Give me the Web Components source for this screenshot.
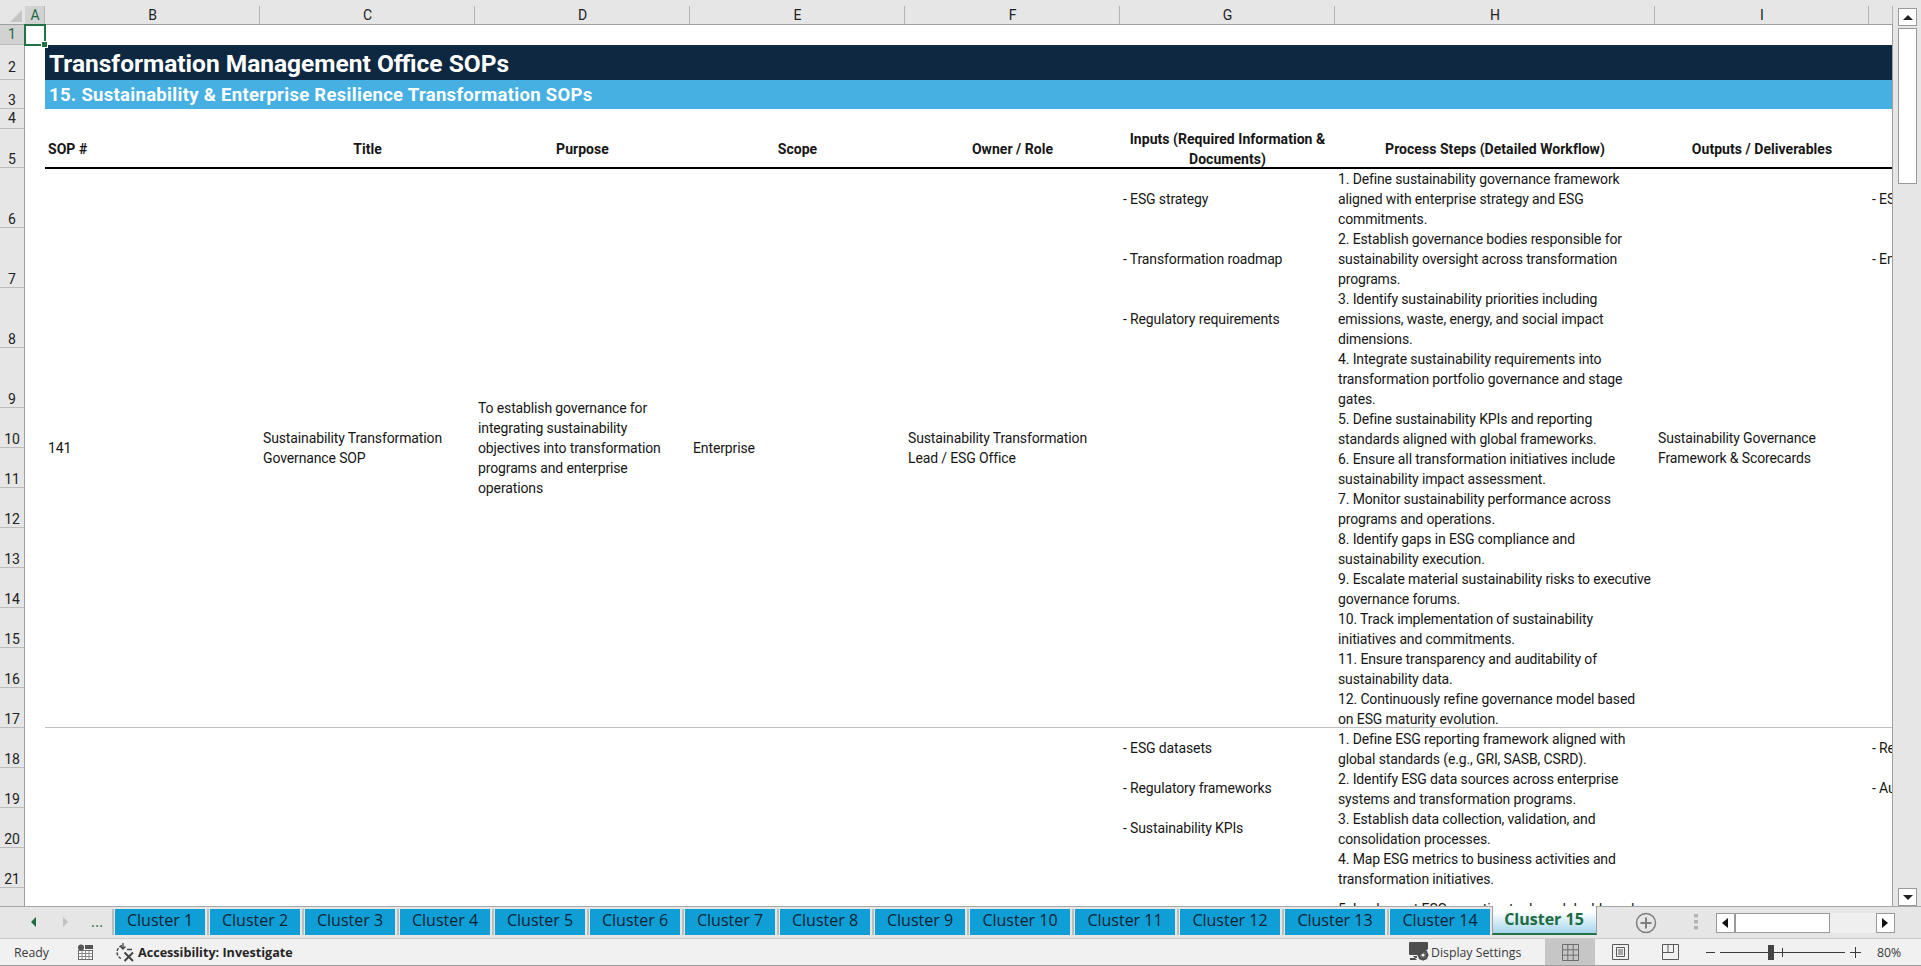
<!DOCTYPE html>
<html>
<head>
<meta charset="utf-8">
<title>Cluster 15</title>
<style>
  html, body { margin: 0; height: 966px; overflow: hidden; background: #e6e6e6; }
  body { font-family: Roboto, "Liberation Sans", sans-serif; }
</style>
</head>
<body>
<xl-app></xl-app>
<script>
const COLS = [25, 20, 215, 215, 215, 215, 215, 215, 320, 214, 24];
const ROWS = [25, 20, 35, 29, 20, 39, 60, 60, 60, 60, 40, 40, 40, 40, 40, 40, 40, 40, 40, 40, 40, 40, 60];

const STEPS = [
    ['1. Define sustainability governance framework', 'aligned with enterprise strategy and ESG', 'commitments.'],
    ['2. Establish governance bodies responsible for', 'sustainability oversight across transformation', 'programs.'],
    ['3. Identify sustainability priorities including', 'emissions, waste, energy, and social impact', 'dimensions.'],
    ['4. Integrate sustainability requirements into', 'transformation portfolio governance and stage', 'gates.'],
    ['5. Define sustainability KPIs and reporting', 'standards aligned with global frameworks.'],
    ['6. Ensure all transformation initiatives include', 'sustainability impact assessment.'],
    ['7. Monitor sustainability performance across', 'programs and operations.'],
    ['8. Identify gaps in ESG compliance and', 'sustainability execution.'],
    ['9. Escalate material sustainability risks to executive', 'governance forums.'],
    ['10. Track implementation of sustainability', 'initiatives and commitments.'],
    ['11. Ensure transparency and auditability of', 'sustainability data.'],
    ['12. Continuously refine governance model based', 'on ESG maturity evolution.'],
    ['1. Define ESG reporting framework aligned with', 'global standards (e.g., GRI, SASB, CSRD).'],
    ['2. Identify ESG data sources across enterprise', 'systems and transformation programs.'],
    ['3. Establish data collection, validation, and', 'consolidation processes.'],
    ['4. Map ESG metrics to business activities and', 'transformation initiatives.']
];

class XlCell extends HTMLElement {
    constructor() {
        super();
        this.attachShadow({ mode: 'open' });
        this.shadowRoot.innerHTML = `
            <style>
                :host {
                    display: flex;
                    align-items: center;
                    box-sizing: border-box;
                    min-width: 0;
                    overflow: hidden;
                    padding-left: 3px;
                    font-size: 14px;
                    line-height: 20px;
                    letter-spacing: -0.13px;
                    color: #161616;
                    white-space: nowrap;
                }
                :host([top]) { align-items: flex-start; padding-top: 1px; }
                :host([shift]) { padding-top: 2px; }
                :host([head]) {
                    font-weight: 700;
                    border-bottom: 2px solid #000;
                    margin-bottom: -1px;
                    padding-top: 1px;
                    letter-spacing: 0.04px;
                }
                :host([mid]) { justify-content: center; text-align: center; padding-left: 0; }
                :host([line]) { border-bottom: 1px solid #bfbfbf; }
            </style>
            <div><slot></slot></div>
        `;
    }
}

class XlSheet extends HTMLElement {
    constructor() {
        super();
        this.attachShadow({ mode: 'open' });
        const letters = 'ABCDEFGHI ';
        let cells = '';
        const at = (row, col, rowSpan = 1, colSpan = 1) =>
            `grid-row:${row + 1} / span ${rowSpan};grid-column:${col + 1} / span ${colSpan}`;

        // column and row headings
        cells += `<div class="corner" style="${at(0, 0)}"><i></i></div>`;
        letters.split('').forEach((l, i) => {
            cells += `<div class="col ${i === 0 ? 'on' : ''}" style="${at(0, i + 1)}">${l}</div>`;
        });
        for (let r = 1; r < ROWS.length; r++) {
            const cls = r === 1 ? 'on' : (r === 2 ? 'two' : (r === 4 ? 'low' : ''));
            cells += `<div class="row ${cls}" style="${at(r, 0)}"><span>${r}</span></div>`;
        }

        // banners
        cells += `<div class="band title" style="${at(2, 2, 1, 9)}"><span>Transformation Management Office SOPs</span></div>`;
        cells += `<div class="band sub" style="${at(3, 2, 1, 9)}"><span>15. Sustainability &amp; Enterprise Resilience Transformation SOPs</span></div>`;

        // table heading
        const heads = ['Title', 'Purpose', 'Scope', 'Owner / Role', 'Inputs (Required Information &amp;<br>Documents)', 'Process Steps (Detailed Workflow)', 'Outputs / Deliverables'];
        cells += `<xl-cell head style="${at(5, 2)}">SOP #</xl-cell>`;
        heads.forEach((h, i) => { cells += `<xl-cell head mid style="${at(5, 3 + i)}">${h}</xl-cell>`; });
        cells += `<xl-cell head style="${at(5, 10)}"></xl-cell>`;

        // SOP 141
        cells += `<xl-cell line style="${at(6, 2, 12)}">141</xl-cell>`;
        cells += `<xl-cell line style="${at(6, 3, 12)}">Sustainability Transformation<br>Governance SOP</xl-cell>`;
        cells += `<xl-cell line style="${at(6, 4, 12)}">To establish governance for<br>integrating sustainability<br>objectives into transformation<br>programs and enterprise<br>operations</xl-cell>`;
        cells += `<xl-cell line style="${at(6, 5, 12)}">Enterprise</xl-cell>`;
        cells += `<xl-cell line style="${at(6, 6, 12)}">Sustainability Transformation<br>Lead / ESG Office</xl-cell>`;
        cells += `<xl-cell line style="${at(6, 9, 12)}">Sustainability Governance<br>Framework &amp; Scorecards</xl-cell>`;
        ['- ESG strategy', '- Transformation roadmap', '- Regulatory requirements'].forEach((t, i) => {
            cells += `<xl-cell shift style="${at(6 + i, 7)}">${t}</xl-cell>`;
        });
        cells += `<xl-cell line style="${at(17, 7)}"></xl-cell><xl-cell line style="${at(17, 10)}"></xl-cell>`;
        cells += `<xl-cell shift style="${at(6, 10)}">- ES</xl-cell><xl-cell shift style="${at(7, 10)}">- En</xl-cell>`;

        // SOP 142, only its first rows are in view
        ['- ESG datasets', '- Regulatory frameworks', '- Sustainability KPIs'].forEach((t, i) => {
            cells += `<xl-cell style="${at(18 + i, 7)}">${t}</xl-cell>`;
        });
        cells += `<xl-cell style="${at(18, 10)}">- Re</xl-cell><xl-cell style="${at(19, 10)}">- Au</xl-cell>`;

        STEPS.forEach((lines, i) => {
            const last = i === 11 ? 'line' : '';
            cells += `<xl-cell top ${last} style="${at(6 + i, 8)}">${lines.join('<br>')}</xl-cell>`;
        });
        cells += `<xl-cell class="next" style="${at(22, 8)}">5. Implement ESG reporting tools and dashboards</xl-cell>`;

        this.shadowRoot.innerHTML = `
            <style>
                :host {
                    display: block;
                    flex: none;
                    position: relative;
                    width: 1893px;
                    height: 906px;
                    box-sizing: border-box;
                    overflow: hidden;
                    background: #fff;
                    font-family: Roboto, "Liberation Sans", sans-serif;
                }
                .grid {
                    display: grid;
                    grid-template-columns: ${COLS.map(c => c + 'px').join(' ')};
                    grid-template-rows: ${ROWS.map(r => r + 'px').join(' ')};
                }
                .corner, .col { background: #e6e6e6; border-bottom: 1px solid #9f9f9f; box-sizing: border-box; }
                .corner { position: relative; }
                .corner i {
                    position: absolute; left: 10px; top: 10px; width: 0; height: 0;
                    border-left: 12px solid transparent;
                    border-bottom: 12px solid #c4c4c4;
                }
                .col {
                    display: flex; align-items: flex-end; justify-content: center;
                    font-size: 14px; line-height: 17px; color: #222;
                    position: relative;
                }
                .col::after {
                    content: ''; position: absolute; right: 0; top: 6px; bottom: 0;
                    width: 1px; background: #b4b4b4;
                }
                .col.on { background: linear-gradient(#e6e6e6 6px, #d2d2d2 6px); color: #1d6b41; }
                .row {
                    display: flex; align-items: flex-end; justify-content: center;
                    background: #e6e6e6;
                    border-right: 1px solid #9f9f9f;
                    border-bottom: 1px solid #bdbdbd;
                    box-sizing: border-box;
                    font-size: 14px; color: #222;
                }
                .row span { line-height: 18px; margin-bottom: -1px; }
                .row.on span, .row.low span { margin-bottom: 1px; }
                .row.two span { margin-bottom: 3px; }
                .row.on { background: #d2d2d2; color: #1d6b41; }
                .band { display: flex; align-items: center; padding: 1px 0 0 4px; box-sizing: border-box; overflow: hidden; color: #fff; font-weight: 700; white-space: nowrap; }
                .title { background: #0e2841; font-size: 24.5px; }
                .sub { background: #45b0e1; font-size: 18.5px; letter-spacing: 0.3px; }
                .sel {
                    position: absolute; left: 24px; top: 24px; width: 22px; height: 22px;
                    box-sizing: border-box;
                    border: 2px solid #217346;
                }
                .sel::after {
                    content: ''; position: absolute; right: -4px; bottom: -4px;
                    width: 5px; height: 5px; background: #217346; border: 1px solid #fff;
                }
                .edge { position: absolute; right: 0; top: 25px; bottom: 0; width: 1px; background: #9f9f9f; }
                xl-cell.next { padding-top: 11px; align-items: flex-start; }
            </style>
            <div class="grid">${cells}</div>
            <div class="sel"></div>
            <div class="edge"></div>
        `;
    }
}

class XlVscroll extends HTMLElement {
    constructor() {
        super();
        this.attachShadow({ mode: 'open' });
        this.shadowRoot.innerHTML = `
            <style>
                :host {
                    display: flex;
                    flex: 1;
                    flex-direction: column;
                    align-items: center;
                    box-sizing: border-box;
                    height: 906px;
                    padding: 8px 0 0 1px;
                    background: #e6e6e6;
                }
                .btn {
                    width: 19px; height: 18px; box-sizing: border-box;
                    background: #fff; border: 1px solid #9a9a9a;
                    display: flex; align-items: center; justify-content: center;
                }
                .thumb {
                    width: 19px; height: 156px; box-sizing: border-box; margin-top: 2px;
                    background: #fff; border: 1px solid #9a9a9a;
                }
                .gap { flex: 1; }
                i { width: 0; height: 0; border: 5px solid transparent; }
                .up { border-bottom: 5px solid #222; border-top: 0; }
                .down { border-top: 5px solid #222; border-bottom: 0; }
            </style>
            <div class="btn"><i class="up"></i></div>
            <div class="thumb"></div>
            <div class="gap"></div>
            <div class="btn"><i class="down"></i></div>
        `;
    }
}

class XlTab extends HTMLElement {
    constructor() {
        super();
        this.attachShadow({ mode: 'open' });
        this.shadowRoot.innerHTML = `
            <style>
                :host {
                    display: flex;
                    flex: none;
                    align-items: center;
                    justify-content: center;
                    box-sizing: border-box;
                    width: 90px;
                    height: 26px;
                    padding-bottom: 4px;
                    background: #0f9ed5;
                    color: #0a2433;
                    font-size: 16px;
                    white-space: nowrap;
                }
                :host([wide]) { width: 100px; }
                :host([active]) {
                    width: 105px;
                    height: 29px;
                    margin: -3px 0 0 -3.5px;
                    padding: 0 0 1px;
                    background: linear-gradient(#fff 20%, #a5d6ee);
                    border-left: 1px solid #9f9f9f;
                    border-right: 1px solid #9f9f9f;
                    border-bottom: 2px solid #217346;
                    color: #1d6b41;
                    font-weight: 700;
                }
            </style>
            <slot></slot>
        `;
    }
}

class XlTabBar extends HTMLElement {
    constructor() {
        super();
        this.attachShadow({ mode: 'open' });
        let tabs = '';
        for (let n = 1; n <= 15; n++) {
            const attr = n === 15 ? 'active' : (n >= 10 ? 'wide' : '');
            tabs += `<i class="sep"></i><xl-tab ${attr}>Cluster ${n}</xl-tab>`;
        }
        this.shadowRoot.innerHTML = `
            <style>
                :host {
                    display: flex;
                    flex: none;
                    align-items: flex-start;
                    box-sizing: border-box;
                    height: 32px;
                    padding-top: 2px;
                    background: #e6e6e6;
                    border-top: 1px solid #a6a6a6;
                    font-family: "Open Sans", Roboto, sans-serif;
                }
                .nav { display: flex; align-items: center; width: 111.5px; height: 26px; flex: none; }
                .nav svg { flex: none; }
                .dots { margin-left: 22px; color: #1d6b41; font-size: 14px; line-height: 18px; letter-spacing: 0.5px; }
                .sep { width: 2px; height: 26px; margin: 0 1.5px; background: #bdbdbd; flex: none; }
                .sep:first-of-type { margin: 0 1.5px 0 0; }
                .plus { margin: 3px 0 0 38px; flex: none; }
                .grip { margin: 5px 0 0 37px; flex: none; }
                .hs {
                    display: flex; flex: none; box-sizing: border-box;
                    width: 179px; height: 20px; margin: 4px 0 0 18px;
                    background: #efefef;
                }
                .hs b { display: flex; align-items: center; justify-content: center; box-sizing: border-box; background: #fff; border: 1px solid #9a9a9a; }
                .hs .arr { width: 19px; }
                .hs .thumb { width: 95px; }
                .hs .track { flex: 1; }
                .hs i { width: 0; height: 0; border: 5px solid transparent; }
                .hs .l { border-right: 6px solid #111; border-left: 0; }
                .hs .r { border-left: 6px solid #111; border-right: 0; }
            </style>
            <div class="nav">
                <svg width="7" height="12" viewBox="0 0 7 12" style="margin-left:30px"><path d="M6 1 L1 6 L6 11 Z" fill="#1d6b41"/></svg>
                <svg width="7" height="12" viewBox="0 0 7 12" style="margin-left:25px"><path d="M1 1 L6 6 L1 11 Z" fill="#c2c2c2"/></svg>
                <span class="dots">...</span>
            </div>
            ${tabs}
            <svg class="plus" width="22" height="22" viewBox="0 0 22 22" fill="none" stroke="#7f7f7f">
                <circle cx="11" cy="11" r="9.5" stroke-width="1.5"/>
                <path d="M11 5.5 V16.5 M5.5 11 H16.5" stroke-width="2"/>
            </svg>
            <svg class="grip" width="4" height="16" viewBox="0 0 4 16" fill="#b3b3b3">
                <rect width="4" height="3.4"/><rect y="6" width="4" height="3.4"/><rect y="12" width="4" height="3.4"/>
            </svg>
            <div class="hs">
                <b class="arr"><i class="l"></i></b>
                <b class="thumb"></b>
                <span class="track"></span>
                <b class="arr"><i class="r"></i></b>
            </div>
        `;
    }
}

class XlStatus extends HTMLElement {
    constructor() {
        super();
        this.attachShadow({ mode: 'open' });
        this.shadowRoot.innerHTML = `
            <style>
                :host {
                    display: flex;
                    flex: 1;
                    align-items: center;
                    box-sizing: border-box;
                    background: #f1f1f1;
                    border-top: 1px solid #c9c9c9;
                    border-bottom: 1px solid #9c9c9c;
                    font-family: "Open Sans", Roboto, sans-serif;
                    font-size: 12.3px;
                    color: #3a3a3a;
                    white-space: nowrap;
                }
                svg { flex: none; }
                .ready { margin-left: 14px; width: 63px; }
                .acc { margin-left: 3px; font-size: 12.6px; font-weight: 700; color: #262626; }
                .disp { margin-left: auto; }
                .view { display: flex; align-items: center; justify-content: center; width: 50px; align-self: stretch; flex: none; }
                .view.on { background: #c6c6c6; }
                .zoom { display: flex; align-items: center; flex: none; }
                .track { position: relative; width: 125px; height: 1px; background: #3a3a3a; margin: 0 5px; }
                .track b { position: absolute; left: 48px; top: -7px; width: 6px; height: 15px; background: #444; }
                .track u { position: absolute; left: 62px; top: -4px; width: 1px; height: 9px; background: #3a3a3a; }
                .pct { width: 60px; padding-left: 16px; box-sizing: border-box; }
            </style>
            <span class="ready">Ready</span>
            <svg width="17" height="16" viewBox="0 0 17 16">
                <circle cx="4" cy="3.5" r="3" fill="#555"/>
                <rect x="8" y="1" width="8" height="4" fill="#555"/>
                <rect x="1.5" y="6.5" width="14" height="9" fill="#fff" stroke="#666"/>
                <path d="M1.5 9.5 H15.5 M1.5 12.5 H15.5 M5 6.5 V15.5 M8.5 6.5 V15.5 M12 6.5 V15.5" stroke="#888" stroke-width="1"/>
            </svg>
            <svg width="20" height="20" viewBox="0 0 20 20" fill="none" stroke="#444" style="margin-left:21px">
                <path d="M7 3.5 A7 7 0 0 0 6 16.5" stroke-width="1.4" stroke-dasharray="3 1.5"/>
                <path d="M8 1 V7 M5.5 4.5 L8 7 L10.5 4.5 M12 7.5 H17" stroke-width="1.3"/>
                <path d="M9.5 10.5 L18 19 M18 10.5 L9.5 19" stroke-width="2"/>
            </svg>
            <span class="acc">Accessibility: Investigate</span>
            <svg class="disp" width="22" height="20" viewBox="0 0 22 20">
                <path d="M2 0 H19 Q20 0 20 1 V7 L12 13 H2 Q1 13 1 12 V1 Q1 0 2 0 Z M5 14 H9 V16 H2 V18 H9" fill="#4d4d4d"/>
                <circle cx="15" cy="13" r="4" fill="none" stroke="#4d4d4d" stroke-width="2.4"/>
                <path d="M15 7.5 V18.5 M9.5 13 H20.5 M11 9 L19 17 M19 9 L11 17" stroke="#4d4d4d" stroke-width="1.4"/>
                <circle cx="15" cy="13" r="1.6" fill="#f1f1f1"/>
            </svg>
            <span style="margin-left:1px;margin-right:23px;width:91px">Display Settings</span>
            <div class="view on">
                <svg width="17" height="17" viewBox="0 0 17 17" fill="none" stroke="#6d6d6d"><path d="M.5 .5 H16.5 V16.5 H.5 Z M.5 5.8 H16.5 M.5 11.2 H16.5 M5.8 .5 V16.5 M11.2 .5 V16.5"/></svg>
            </div>
            <div class="view">
                <svg width="17" height="16" viewBox="0 0 17 16" fill="none" stroke="#5a5a5a"><path d="M.5 .5 H16.5 V15.5 H.5 Z M4.5 3.5 H12.5 V12.5 H4.5 Z M6 6 H11 M6 8 H11 M6 10 H11"/></svg>
            </div>
            <div class="view">
                <svg width="17" height="16" viewBox="0 0 17 16" fill="none" stroke="#5a5a5a"><path d="M.5 .5 H16.5 V15.5 H.5 Z M.5 8.5 H11.5 V.5 M6 .5 V8.5"/></svg>
            </div>
            <div class="zoom" style="margin-left:11px">
                <svg width="9" height="9" viewBox="0 0 9 9"><path d="M0 4.5 H9" stroke="#3a3a3a"/></svg>
                <div class="track"><b></b><u></u></div>
                <svg width="11" height="11" viewBox="0 0 11 11"><path d="M0 5.5 H11 M5.5 0 V11" stroke="#3a3a3a"/></svg>
            </div>
            <span class="pct">80%</span>
        `;
    }
}

class XlApp extends HTMLElement {
    constructor() {
        super();
        this.attachShadow({ mode: 'open' });
        this.shadowRoot.innerHTML = `
            <style>
                :host { display: flex; flex-direction: column; width: 1921px; height: 966px; overflow: hidden; }
                .top { display: flex; flex: none; height: 906px; }
            </style>
            <div class="top"><xl-sheet></xl-sheet><xl-vscroll></xl-vscroll></div>
            <xl-tabbar></xl-tabbar>
            <xl-status></xl-status>
        `;
    }
}

customElements.define('xl-cell', XlCell);
customElements.define('xl-sheet', XlSheet);
customElements.define('xl-vscroll', XlVscroll);
customElements.define('xl-tab', XlTab);
customElements.define('xl-tabbar', XlTabBar);
customElements.define('xl-status', XlStatus);
customElements.define('xl-app', XlApp);
</script>
</body>
</html>
